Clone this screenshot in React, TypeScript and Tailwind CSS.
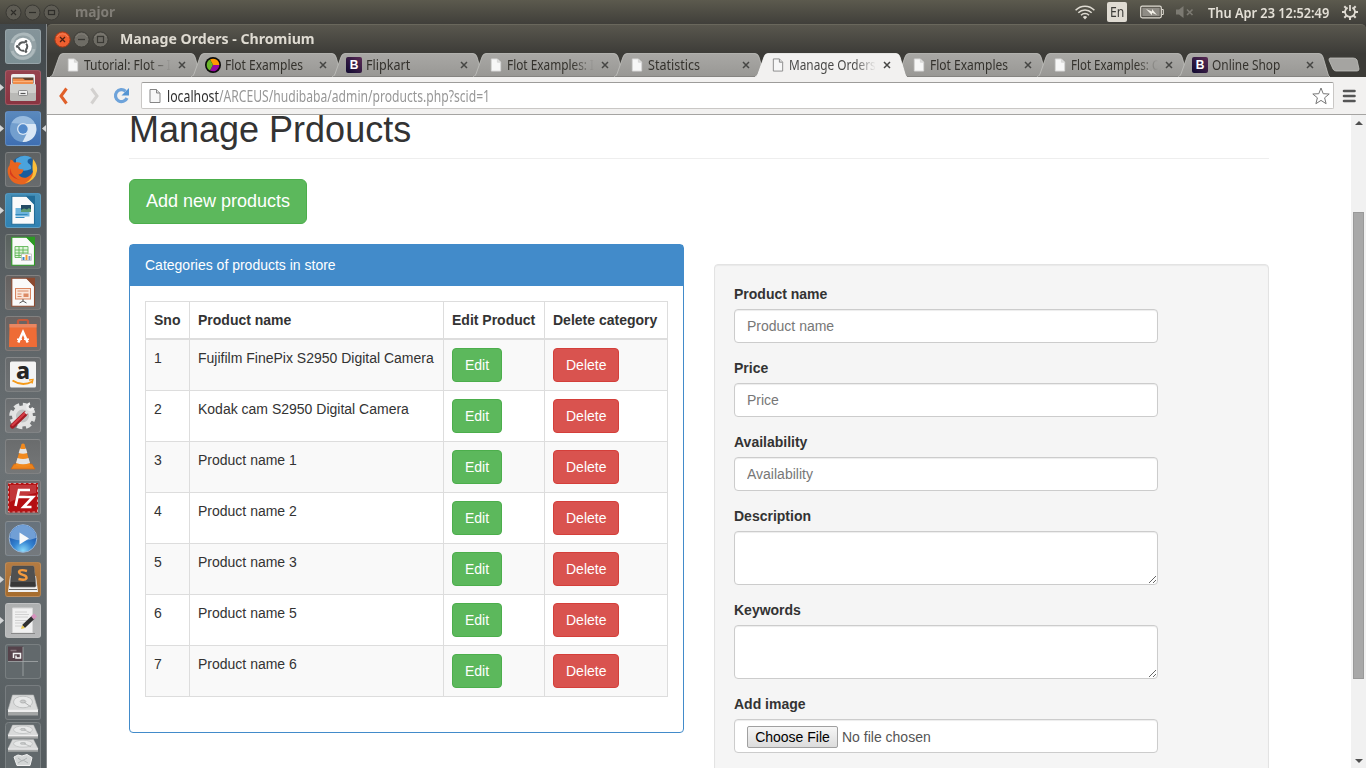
import { useLayoutEffect, useRef, useState, type ReactNode } from "react";

const uiFont = "font-['Ubuntu_Condensed','Noto_Sans',sans-serif]";

/** Single line of text condensed horizontally so that it fills `width` pixels. */
function FitText({ width, className = "", children }: { width: number; className?: string; children: ReactNode }) {
  const ref = useRef<HTMLSpanElement>(null);
  const [scale, setScale] = useState(1);
  useLayoutEffect(() => {
    if (ref.current) setScale(width / ref.current.offsetWidth);
  }, [width]);
  return (
    <span className={`block shrink-0 ${className}`} style={{ width }}>
      <span ref={ref} className="inline-block origin-left whitespace-nowrap" style={{ transform: `scaleX(${scale})` }}>
        {children}
      </span>
    </span>
  );
}

function Wheel({ kind, hot = false }: { kind: "close" | "min" | "max"; hot?: boolean }) {
  const ink = hot ? "#4b2013" : "#3a3934";
  return (
    <svg className="size-[17px] shrink-0" viewBox="0 0 17 17" fill="none">
      <circle cx="8.5" cy="8.5" r="7.6" fill={hot ? "#ee5f30" : "#6e6c65"} stroke={hot ? "#a83a18" : "#3d3c37"} />
      <path d="M3 6a6.4 6.4 0 0 1 11 0" stroke={hot ? "#f68b66" : "#85827a"} strokeWidth=".8" />
      {kind === "close" && <path d="M6 6l5 5M11 6l-5 5" stroke={ink} strokeWidth="1.3" />}
      {kind === "min" && <path d="M5 8.5h7" stroke={ink} strokeWidth="1.3" />}
      {kind === "max" && <rect x="5.5" y="5.5" width="6" height="6" stroke={ink} strokeWidth="1.2" />}
    </svg>
  );
}

function DimWheel({ kind }: { kind: "close" | "min" | "max" }) {
  return (
    <svg className="size-[17px] shrink-0" viewBox="0 0 17 17" fill="none" stroke="#2f2e2a">
      <circle cx="8.5" cy="8.5" r="7.5" fill="#5e5c54" stroke="#3a3934" />
      {kind === "close" && <path d="M6 6l5 5M11 6l-5 5" strokeWidth="1.1" />}
      {kind === "min" && <path d="M5 8.5h7" strokeWidth="1.2" />}
      {kind === "max" && <rect x="5.5" y="6.5" width="6" height="4" strokeWidth="1.2" />}
    </svg>
  );
}

function TopBar() {
  return (
    <div className={`flex h-6 shrink-0 items-center bg-linear-to-b from-[#5c5a4e] to-[#403f3a] pl-[5px] ${uiFont}`}>
      <div className="flex gap-[2px]">
        <DimWheel kind="close" />
        <DimWheel kind="min" />
        <DimWheel kind="max" />
      </div>
      <FitText width={40} className="ml-[15px] text-[14px] leading-6 font-bold text-[#807d76]">major</FitText>
      <svg className="ml-auto h-[15px] w-[20px] shrink-0" viewBox="0 0 20 15" fill="none" stroke="#dfdbd2" strokeWidth="1.5">
        <path d="M.6 5.2a13 13 0 0 1 18.8 0M3.3 7.8a9.4 9.4 0 0 1 13.4 0M6 10.3a5.6 5.6 0 0 1 8 0" />
        <path d="M7.8 12.1a3 3 0 0 1 4.4 0L10 14.5z" fill="#dfdbd2" stroke="none" />
      </svg>
      <span className="ml-[12px] flex h-5 w-5 shrink-0 items-center justify-center rounded-[2px] bg-[#dfdbd2] text-[14px] text-[#3c3b37]">
        <FitText width={14} className="leading-5">En</FitText>
      </span>
      <svg className="ml-[13px] h-[14px] w-[24px] shrink-0" viewBox="0 0 24 14" fill="none">
        <rect x=".7" y="1.2" width="20.6" height="11.6" rx="1.5" stroke="#dfdbd2" strokeWidth="1.2" />
        <path d="M22 4.5h1.3v5H22" stroke="#dfdbd2" />
        <rect x="2.3" y="2.8" width="17.4" height="8.4" fill="#8f8c85" />
        <path d="M6 4l6 2.600V4l5 6-5-2.200v2.400z" fill="#f3f0e8" />
      </svg>
      <svg className="ml-[12px] h-[14px] w-[18px] shrink-0" viewBox="0 0 18 14" fill="#7c7a72">
        <path d="M0 4.5h3L7.5 1v12L3 9.500H0z" />
        <path d="M11 4.500l5.500 5.500M16.500 4.500L11 10" stroke="#7c7a72" strokeWidth="1.6" />
      </svg>
      <FitText width={121} className="ml-[14px] text-[15px] leading-[22px] font-semibold text-[#e4e0d7]">Thu Apr 23 12:52:49</FitText>
      <svg className="mr-[8px] ml-[13px] size-4 shrink-0" viewBox="0 0 16 16" fill="none" stroke="#dfdbd2">
        <path d="M5.600 3.600a5 5 0 1 0 4.800 0" strokeWidth="1.8" />
        <path d="M8 1v6" strokeWidth="1.8" />
        <path d="M0 8h3M13 8h3M8 13v3M2.300 2.300l2 2M13.700 2.300l-2 2M2.300 13.700l2-2M13.700 13.700l-2-2" strokeWidth="2" />
      </svg>
    </div>
  );
}

/* ---------- Launcher ---------- */

function Doc({ c, children }: { c: string; children: ReactNode }) {
  return (
    <>
      <path d="M6.800 3.300h15l7.700 8v20H6.800z" fill="#fafafa" stroke={c} strokeWidth="1.1" />
      <path d="M21 2.700h9v9z" fill={c} />
      {children}
    </>
  );
}

function Disk() {
  return (
    <>
      <path d="M7.500 10h21l4.500 15H3z" fill="#d9dada" stroke="#b4b6b6" strokeWidth=".6" />
      <path d="M3 25h30v5.500H3z" fill="#a3a5a5" />
      <path d="M3 24.500h30V27H3z" fill="#efefef" />
      <ellipse cx="18" cy="17" rx="9.500" ry="5.800" fill="#e7e8e8" stroke="#bfc1c1" />
      <ellipse cx="18" cy="16.500" rx="2.800" ry="1.500" fill="#cbcdcd" stroke="#a9abab" strokeWidth=".8" />
      <path d="M19 17l7 5" stroke="#b0b2b2" />
    </>
  );
}

type App = { bg: string; left?: boolean; right?: boolean; art: ReactNode };

const apps: App[] = [
  {
    bg: "bg-linear-to-b from-[#85949a] to-[#7d9095]",
    art: (
      <>
        <circle cx="18" cy="17.500" r="13.500" fill="#93a1a5" />
        <path d="M7 14C9 4 24 1 29 12M29 20C27 31 11 33 7 22" fill="none" stroke="#adb9bc" strokeWidth="3" />
        <circle cx="18" cy="17.500" r="8.800" fill="#fff" />
        <circle cx="18" cy="17.500" r="4.300" fill="none" stroke="#56595a" strokeWidth="2" strokeDasharray="7.700 1.300" strokeDashoffset="3.800" />
        <circle cx="12.300" cy="17.500" r="1.400" fill="#56595a" />
        <circle cx="20.900" cy="12.500" r="1.400" fill="#56595a" />
        <circle cx="20.900" cy="22.500" r="1.400" fill="#56595a" />
      </>
    ),
  },
  {
    bg: "bg-linear-to-b from-[#95424e] to-[#8a3441]",
    left: true,
    art: (
      <>
        <path d="M6 6q0-2 2-2h20q2 0 2 2v9H6z" fill="#eee" />
        <path d="M7.500 7.500h21v6h-21z" fill="#5c402e" />
        <path d="M8 8.500h10l2 1.500h8v5H8z" fill="#ef8d4a" />
        <path d="M8 11h20v1H8z" fill="#fbb27b" />
        <rect x="5" y="14" width="26" height="17" rx="1.500" fill="#b9b9b6" />
        <rect x="5" y="14" width="26" height="9" rx="1.500" fill="#cfcfcc" />
        <rect x="13.500" y="20.500" width="9" height="5" rx="1" fill="#f1f1f1" stroke="#777" strokeWidth=".8" />
        <path d="M15.500 23.500h5" stroke="#555" strokeWidth="1.200" />
      </>
    ),
  },
  {
    bg: "bg-linear-to-b from-[#5a89bd] to-[#3f6fb2]",
    left: true,
    right: true,
    art: (
      <>
        <circle cx="18" cy="18" r="13" fill="#739fce" />
        <path d="M6.500 12A13 13 0 0 1 30 13H18z" fill="#98bbdf" />
        <path d="M30.500 13a13 13 0 0 1-13 18l5-10q1-4-4-8z" fill="#dae7f5" />
        <circle cx="18" cy="18" r="6" fill="#d6e5f4" />
        <circle cx="18" cy="18" r="4.700" fill="#5289ca" />
      </>
    ),
  },
  {
    bg: "bg-linear-to-b from-[#5f6263] to-[#686b6d]",
    art: (
      <>
        <circle cx="18.500" cy="17" r="13" fill="#195c9c" />
        <path d="M11 7q8-6 16-1-6 1-4 5 4 2 3 6-8 4-15-1z" fill="#4aa3dc" />
        <path d="M5.500 7.500q2 .500 4 3 4-1 7 1-4 2-3 5 2 1 5 1-1 5-5 5 3 4 8 3 5-2 7-7 1 6-2 9c-6 8-20 6-23-4-2-6 0-9 1-10z" fill="#e8641f" />
        <path d="M28 7q5 6 4 12-2 10-12 12 8-4 8-11-1-4 0-13z" fill="#fbbd39" />
        <path d="M5 16q2 10 11 12-8-1-11-6z" fill="#d83a1c" />
      </>
    ),
  },
  {
    bg: "bg-linear-to-b from-[#468fb7] to-[#2f82b3]",
    left: true,
    art: (
      <Doc c="#226c98">
        <rect x="10.500" y="15" width="14" height="8.500" fill="#6fb4dc" />
        <rect x="16" y="12" width="10" height="7" fill="#234a62" />
        <path d="M16 17l3-1.500 3 1 2-1.500 2 1.500v2.500H16z" fill="#5d9a72" />
        <path d="M10.500 21.500h12M10.500 24.500h9" stroke="#348abc" strokeWidth="1.200" />
      </Doc>
    ),
  },
  {
    bg: "bg-linear-to-b from-[#59615e] to-[#686e6d]",
    art: (
      <Doc c="#2c9b23">
        <path d="M10 12.500h13v11H10zM10 16h13M10 19h13M10 21.500h13M14 12.500v11M18 12.500v11" fill="#dff4da" stroke="#60b657" strokeWidth=".9" />
        <rect x="16.500" y="20" width="10" height="6.500" fill="#fff" stroke="#aaa" strokeWidth=".600" />
        <path d="M17.500 26v-3h2v3z" fill="#3c85c4" />
        <path d="M20.500 26v-5h2v5z" fill="#ef9b31" />
        <path d="M23.500 26v-4h2v4z" fill="#7f93c4" />
      </Doc>
    ),
  },
  {
    bg: "bg-linear-to-b from-[#656160] to-[#6f6e6d]",
    art: (
      <Doc c="#8c4a30">
        <rect x="10.500" y="13.500" width="15" height="10.500" fill="#fae5d9" stroke="#d98560" />
        <path d="M12.500 16h11M12.500 19h4M12.500 21.500h4" stroke="#d98c68" />
        <rect x="18.500" y="18.500" width="5" height="3.500" fill="#dc8a64" />
        <path d="M18 24v2M14.500 28l3.500-2 3.500 2" stroke="#555" fill="none" />
      </Doc>
    ),
  },
  {
    bg: "bg-linear-to-b from-[#6b6361] to-[#6d6b6a]",
    art: (
      <>
        <path d="M13 8.500V5.500q0-1.500 1.500-1.500h7q1.500 0 1.500 1.500v3" fill="none" stroke="#c55a3c" strokeWidth="2.200" />
        <path d="M4.500 8h27l.5 23H4z" fill="#ee6c36" />
        <path d="M4.500 8h27v3.500h-27z" fill="#e98661" />
        <path d="M13.300 26.500l4.700-10.500 4.700 10.500" fill="none" stroke="#fff" strokeWidth="2.500" />
        <path d="M12 23.200h5M19 23.200h5" stroke="#fff" strokeWidth="1.600" />
      </>
    ),
  },
  {
    bg: "bg-linear-to-b from-[#676a6c] to-[#707375]",
    art: (
      <>
        <rect x="5" y="4.500" width="26" height="26" rx="1.500" fill="#f3f3f3" />
        <text x="18" y="21.500" textAnchor="middle" fontFamily="Noto Sans" fontWeight="800" fontSize="23" fill="#252525">a</text>
        <path d="M7.500 23.500q10 6.500 20 1" fill="none" stroke="#f59a19" strokeWidth="1.800" />
        <path d="M24 23l4-.5-1 4" fill="none" stroke="#f59a19" strokeWidth="1.300" />
      </>
    ),
  },
  {
    bg: "bg-linear-to-b from-[#6b6e70] to-[#77797b]",
    art: (
      <>
        <circle cx="17.500" cy="18" r="11" fill="none" stroke="#e1e2e2" strokeWidth="4.500" strokeDasharray="5.200 3.440" />
        <circle cx="17.500" cy="18" r="8.500" fill="#c1c3c3" stroke="#e3e3e3" strokeWidth="4" />
        <path d="M7.500 28L20 16" stroke="#a31c24" strokeWidth="5" strokeLinecap="round" />
        <path d="M7.500 27L19.500 15.500" stroke="#d63c46" strokeWidth="2.200" strokeLinecap="round" />
        <path d="M20.500 15.500l3.500-3.500" stroke="#ddd" strokeWidth="3" />
        <path d="M28.500 10a3.200 3.200 0 1 1-3.500-4.500" fill="none" stroke="#eee" strokeWidth="2.600" />
      </>
    ),
  },
  {
    bg: "bg-linear-to-b from-[#6a6c6d] to-[#757778]",
    art: (
      <>
        <path d="M9 25h18l3 5H6z" fill="#ed831c" stroke="#cc6714" strokeWidth=".700" />
        <path d="M16.500 5q1.500-1 3 0l6 21.500q-7.500 3-15 0z" fill="#f28a1e" />
        <path d="M15 9.500q3 1 6 0l1.300 4.500q-4.300 1.500-8.600 0zM12.500 19q5.500 2 11 0l1.500 5q-7 2.500-14 0z" fill="#e4e4e4" />
      </>
    ),
  },
  {
    bg: "bg-linear-to-b from-[#6f6b6d] to-[#77797a]",
    art: (
      <>
        <rect x="3" y="3" width="30" height="29.500" fill="#b51515" />
        <rect x="3.500" y="3.500" width="29" height="28.500" fill="none" stroke="#d99a9a" strokeDasharray="2.500 2.500" />
        <rect x="5" y="5" width="26" height="25.500" fill="#b40e12" />
        <path d="M5 5h26v8Q18 15 5 22z" fill="#c2373a" />
        <path d="M10.500 26L14 10h11M12 17h7M18.500 17H28l-9.500 10h8" fill="none" stroke="#fff" strokeWidth="2.600" />
      </>
    ),
  },
  {
    bg: "bg-linear-to-b from-[#67727c] to-[#74797d]",
    art: (
      <>
        <defs>
          <radialGradient id="orb" cx=".5" cy=".95" r=".7">
            <stop offset="0" stopColor="#8bdcfb" />
            <stop offset=".5" stopColor="#3585d2" />
            <stop offset="1" stopColor="#1f58ab" />
          </radialGradient>
        </defs>
        <circle cx="18" cy="17.500" r="13.800" fill="url(#orb)" stroke="#98b6d8" />
        <path d="M5 17a13 13 0 0 1 26 0q-13 5-26 0z" fill="#719fd5" />
        <path d="M14.500 11.500l9.500 6-9.500 6z" fill="#f8f9fa" />
      </>
    ),
  },
  {
    bg: "bg-linear-to-b from-[#b47b42] to-[#a66c2d]",
    left: true,
    art: (
      <>
        <path d="M5 14h26l2 16H3z" fill="#f1f1f1" />
        <path d="M4 27.500h28" stroke="#444" strokeWidth=".8" />
        <path d="M8 4h20q1 0 1 1l2 18.500q0 1.500-1.500 1.500h-23Q5 25 5 23.500L7 5q0-1 1-1z" fill="#383838" stroke="#777" strokeWidth=".7" />
        <path d="M7.500 5h21l1.500 15H6z" fill="#505050" />
        <path d="M22 9q-7-2-8 .800 0 2 4 3t3.500 3.500q-1.500 2.500-8 .700" fill="none" stroke="#f39a3e" strokeWidth="2.400" />
      </>
    ),
  },
  {
    bg: "bg-linear-to-b from-[#aeb0b0] to-[#b7b8b9]",
    left: true,
    art: (
      <>
        <path d="M7.500 5h20v25h-20z" fill="#f1f1f1" stroke="#d6d6d6" />
        <path d="M10 9h12M10 11.500h14M10 14h13M10 17.500h12M10 20h10M10 23h7" stroke="#c9c9c9" strokeWidth=".8" />
        <path d="M6 30.500h24" stroke="#888" />
        <path d="M18.500 23.500L28.500 14" stroke="#303030" strokeWidth="4" />
        <path d="M27.500 15l3-3" stroke="#d692bd" strokeWidth="4" />
        <path d="M16 26l1.200-3.800 2.800 2.800z" fill="#e8c545" />
      </>
    ),
  },
  {
    bg: "bg-[#62696c]",
    art: (
      <>
        <rect x="3" y="2.500" width="15" height="15" fill="#55434b" />
        <path d="M18 3v29M3 17.500h30" stroke="#a4a9ab" strokeWidth=".8" />
        <path d="M5.500 6.500h6" stroke="#85757c" strokeWidth="1.500" />
        <path d="M8.500 14V9.500h7V14h-4.500v-2.500" fill="none" stroke="#f2f2f2" strokeWidth="1.500" />
      </>
    ),
  },
  { bg: "bg-[#61676a]", art: <Disk /> },
];

function Launcher() {
  return (
    <div className="flex w-[47px] shrink-0 flex-col overflow-hidden border-r border-[#85898b] bg-linear-to-b from-[#42484b] via-[#6c7275] via-60% to-[#555c5f] pt-[5px] pl-[5px] font-['Noto_Sans',sans-serif]">
      {apps.map((app, i) => (
        <div key={i} className={`relative mb-[6px] h-[35px] w-[36px] shrink-0 rounded-[3px] border border-white/15 ${app.bg}`}>
          <svg className="-mt-px -ml-px h-[35px] w-[36px] max-w-none" viewBox="0 0 36 35">{app.art}</svg>
          {app.left && (
            <svg className="absolute top-[13px] -left-[6px] h-[7px] w-[4px]" viewBox="0 0 4 7"><path d="M0 0l4 3.500-4 3.500z" fill="#d5d7d8" /></svg>
          )}
          {app.right && (
            <svg className="absolute top-[13px] -right-[6px] h-[7px] w-[4px]" viewBox="0 0 4 7"><path d="M4 0L0 3.500l4 3.500z" fill="#d5d7d8" /></svg>
          )}
        </div>
      ))}
      <svg className="-mt-[4px] h-[46px] w-[36px] shrink-0" viewBox="0 0 36 46">
        <path d="M.5 46V3.500q0-3 3-3h29q3 0 3 3V46" fill="#62696c" stroke="#7b8183" />
        <g transform="translate(0 -3.500) scale(1 .66)"><Disk /></g>
        <g transform="translate(0 11.500) scale(1 .6)"><Disk /></g>
        <path d="M9 35l4-2 4 1 5-1.500 5 3-2 8H12z" fill="#d3d6d6" stroke="#f0f0f0" />
        <path d="M13 36l4 3 5-3M13 41l5-3 5 3" fill="none" stroke="#b0b4b5" />
      </svg>
    </div>
  );
}

/* ---------- Browser chrome ---------- */

function PageIcon({ outline = "#cfcfcf", className = "" }: { outline?: string; className?: string }) {
  return (
    <svg className={`shrink-0 ${className}`} viewBox="0 0 12 15">
      <path d="M1 1h6.500L11 4.500V14H1z" fill="#f7f7f7" stroke={outline} />
      <path d="M7.500 1v3.500H11" fill="#ddd" stroke={outline} />
    </svg>
  );
}

function BootstrapIcon() {
  return (
    <span className="-ml-[3px] flex size-4 shrink-0 items-center justify-center rounded-[2px] bg-linear-to-tr from-[#100930] to-[#5c2a55] font-['Liberation_Sans',sans-serif] text-[12px] leading-4 font-bold text-white">
      B
    </span>
  );
}

function FlotIcon() {
  return (
    <svg className="-ml-[3px] size-4 shrink-0" viewBox="0 0 16 16">
      <circle cx="8" cy="8" r="8" fill="#0a0a0a" />
      <path d="M8 8L5 2.400A6.300 6.300 0 0 1 14.300 8z" fill="#ff9a00" />
      <path d="M8 8h6.300A6.300 6.300 0 0 1 5 13.500z" fill="#960aa0" />
      <path d="M8 8l-3 5.500A6.300 6.300 0 0 1 5 2.400z" fill="#6bb52a" />
    </svg>
  );
}

type TabInfo = { title: string; width: number; icon: "page" | "flot" | "boot"; active?: boolean; fade?: boolean };

const tabs: TabInfo[] = [
  { title: "Tutorial: Flot – I", width: 87, icon: "page", fade: true },
  { title: "Flot Examples", width: 78, icon: "flot" },
  { title: "Flipkart", width: 44, icon: "boot" },
  { title: "Flot Examples: I", width: 87, icon: "page", fade: true },
  { title: "Statistics", width: 52, icon: "page" },
  { title: "Manage Orders", width: 87, icon: "page", active: true, fade: true },
  { title: "Flot Examples", width: 78, icon: "page" },
  { title: "Flot Examples: C", width: 88, icon: "page", fade: true },
  { title: "Online Shop", width: 68, icon: "boot" },
];

function Tab({ tab }: { tab: TabInfo }) {
  const fill = tab.active ? "#f2f1f0" : "url(#tab-grey)";
  return (
    <div className={`relative -mr-[11px] h-6 w-[152px] shrink-0 ${tab.active ? "z-10" : ""}`}>
      <svg className="absolute inset-0 h-6 w-[152px]" viewBox="0 0 152 24">
        <defs>
          <linearGradient id="tab-grey" x1="0" y1="0" x2="0" y2="1">
            <stop offset="0" stopColor="#a9a8a5" />
            <stop offset="1" stopColor="#989794" />
          </linearGradient>
        </defs>
        <path d="M0 24Q2 23.500 3 21L9 4Q10 .5 13 .5H141Q144 .5 145 4L150 21Q150.500 23.500 152 24Z" fill={fill} />
        <path d="M0 24Q2 23.500 3 21L9 4Q10 .5 13 .5H141Q144 .5 145 4L150 21Q150.500 23.500 152 24" fill="none" stroke={tab.active ? "#fbfbfa" : "#c2c1be"} strokeWidth=".8" />
        {!tab.active && <path d="M1 23.600h150" stroke="#7d7c79" strokeWidth=".8" />}
      </svg>
      <div className="relative flex h-6 items-center pl-[17px]">
        {tab.icon === "page" && <PageIcon outline={tab.active ? "#888" : "#d6d6d5"} className="mr-[5px] h-[14px] w-[12px]" />}
        {tab.icon === "flot" && <span className="mr-[4px]"><FlotIcon /></span>}
        {tab.icon === "boot" && <span className="mr-[4px]"><BootstrapIcon /></span>}
        <div className={`w-[87px] overflow-hidden ${tab.fade ? "mask-r-from-75% mask-r-to-100%" : ""}`}>
          <FitText width={tab.width} className={`text-[14px] leading-[22px] ${tab.active ? "text-[#4a4a48]" : "text-[#34322d]"}`}>{tab.title}</FitText>
        </div>
        <svg className="ml-[7px] size-2 shrink-0" viewBox="0 0 8 8"><path d="M1 1l6 6M7 1L1 7" stroke="#464644" strokeWidth="1.500" /></svg>
      </div>
    </div>
  );
}

function BrowserChrome() {
  return (
    <div className={`shrink-0 ${uiFont}`}>
      <div className="bg-[#3c3b37]">
        <div className="rounded-t-[5px] border-t border-[#69675c] bg-linear-to-b from-[#59574e] to-[#3d3c38]">
          <div className="flex h-[28px] items-center pl-[7px]">
            <div className="flex gap-[2px]">
              <Wheel kind="close" hot />
              <Wheel kind="min" />
              <Wheel kind="max" />
            </div>
            <FitText width={195} className="ml-[11px] text-[14px] leading-7 font-bold text-[#dfdbd2]">Manage Orders - Chromium</FitText>
          </div>
        </div>
        <div className="flex h-6 pl-[3px]">
          {tabs.map((t, i) => <Tab key={i} tab={t} />)}
          <svg className="mt-[4px] ml-[9px] h-[16px] w-[32px] shrink-0" viewBox="0 0 32 16">
            <path d="M2 1h23q3 0 4 2l2 9q0 2-2 2H8q-2 0-3-2L1 3q0-2 1-2z" fill="#a5a4a1" stroke="#c2c1be" strokeWidth=".8" />
          </svg>
        </div>
      </div>
      <div className="flex h-[38px] items-center border-b border-[#a5a4a2] bg-[#f2f1f0] pl-[10px]">
        <svg className="h-[18px] w-[12px]" viewBox="0 0 12 18" fill="none"><path d="M9.500 1.500L4 9l5.500 7.500" stroke="#e0602a" strokeWidth="3" /></svg>
        <svg className="ml-[19px] h-[18px] w-[12px]" viewBox="0 0 12 18" fill="none"><path d="M3.500 1.500L9 9l-5.500 7.500" stroke="#d3d1cf" strokeWidth="3" /></svg>
        <svg className="ml-[13px] size-[17px]" viewBox="0 0 17 17" fill="none">
          <path d="M14 11A6 6 0 1 1 12.500 4.200" stroke="#6ea3da" strokeWidth="3.200" />
          <path d="M16 1v7.500H8.500z" fill="#5595d3" />
        </svg>
        <div className="ml-[11px] flex h-[27px] w-[1193px] items-center rounded-[2px] border border-[#c9c7c5] border-t-[#9d9c9a] bg-white pl-[7px]">
          <PageIcon outline="#858585" className="h-[16px] w-[12px]" />
          <FitText width={52} className="ml-[6px] text-[17px] leading-[22px] text-[#303030]">localhost</FitText>
          <FitText width={271} className="text-[17px] leading-[22px] text-[#979797]">/ARCEUS/hudibaba/admin/products.php?scid=1</FitText>
          <svg className="mr-[3px] ml-auto size-[18px]" viewBox="0 0 18 18"><path d="M9 1l2.200 5.700 6 .3-4.600 3.800 1.500 5.900L9 13.400l-5.100 3.300 1.500-5.900L.8 7l6-.3z" fill="#fff" stroke="#777" strokeLinejoin="round" /></svg>
        </div>
        <svg className="ml-[8px] h-[14px] w-[14px]" viewBox="0 0 14 14"><path d="M2 2h10.500M2 7h10.500M2 12h10.500" stroke="#555" strokeWidth="2.600" strokeLinecap="round" /></svg>
      </div>
    </div>
  );
}

/* ---------- Page ---------- */

const products = [
  "Fujifilm FinePix S2950 Digital Camera",
  "Kodak cam S2950 Digital Camera",
  "Product name 1",
  "Product name 2",
  "Product name 3",
  "Product name 5",
  "Product name 6",
];

function ProductTable() {
  const cell = "border border-[#ddd] p-2 text-left align-top";
  return (
    <table className="w-[523px] table-fixed border-collapse">
      <colgroup>
        <col className="w-[44px]" />
        <col className="w-[254px]" />
        <col className="w-[101px]" />
        <col />
      </colgroup>
      <thead>
        <tr>
          {["Sno", "Product name", "Edit Product", "Delete category"].map((h) => (
            <th key={h} className="border border-b-2 border-[#ddd] p-2 text-left font-bold whitespace-nowrap">{h}</th>
          ))}
        </tr>
      </thead>
      <tbody>
        {products.map((name, i) => (
          <tr key={name} className="odd:bg-[#f9f9f9]">
            <td className={cell}>{i + 1}</td>
            <td className={`${cell} whitespace-nowrap`}>{name}</td>
            <td className={cell}>
              <button className="block h-[34px] rounded-[4px] border border-[#4cae4c] bg-[#5cb85c] px-3 text-white">Edit</button>
            </td>
            <td className={cell}>
              <button className="block h-[34px] rounded-[4px] border border-[#d43f3a] bg-[#d9534f] px-3 text-white">Delete</button>
            </td>
          </tr>
        ))}
      </tbody>
    </table>
  );
}

function Field({ label, children }: { label: string; children: ReactNode }) {
  return (
    <div className="mb-[15px] w-[424px]">
      <label className="mb-[5px] block font-bold">{label}</label>
      {children}
    </div>
  );
}

const control = "block w-full rounded-[4px] border border-[#ccc] bg-white px-3 shadow-[inset_0_1px_1px_rgba(0,0,0,0.075)]";

function ProductForm() {
  return (
    <div className="mt-5 h-[560px] w-[555px] rounded-[4px] border border-[#e3e3e3] bg-[#f5f5f5] p-[19px] shadow-[inset_0_1px_1px_rgba(0,0,0,0.05)]">
      {["Product name", "Price", "Availability"].map((f) => (
        <Field key={f} label={f}>
          <input placeholder={f} className={`${control} h-[34px] placeholder:text-[#777]`} />
        </Field>
      ))}
      {["Description", "Keywords"].map((f) => (
        <Field key={f} label={f}>
          <textarea className={`${control} h-[54px] resize`} />
        </Field>
      ))}
      <Field label="Add image">
        <div className={`${control} flex h-[34px] items-center pt-[2px] text-[#555]`}>
          <button className="mr-1 h-[22px] w-[91px] rounded-[2px] border border-[#a0a0a0] bg-linear-to-b from-[#f6f6f6] to-[#dcdcdc] text-black">Choose File</button>
          No file chosen
        </div>
      </Field>
    </div>
  );
}

function Page() {
  return (
    <div className="flex min-h-0 flex-1 bg-white font-['Liberation_Sans',Arial,sans-serif] text-[14px] leading-5 text-[#333]">
      <div className="min-w-0 flex-1 overflow-hidden pl-[82px]">
        <div className="-mt-[6px] w-[1140px]">
          <h1 className="h-[50px] border-b border-[#eee] text-[36px] leading-[42px] font-medium">Manage Prdoucts</h1>
          <button className="mt-5 block h-[45px] w-[178px] rounded-[6px] border border-[#4cae4c] bg-[#5cb85c] pb-[2px] text-[18px] text-white">Add new products</button>
          <div className="mt-5 flex items-start justify-between">
            <div className="h-[489px] w-[555px] rounded-[4px] border border-[#428bca] bg-white">
              <div className="h-[41px] bg-[#428bca] px-[15px] py-[10px] text-white">Categories of products in store</div>
              <div className="p-[15px]">
                <ProductTable />
              </div>
            </div>
            <ProductForm />
          </div>
        </div>
      </div>
      <div className="flex w-[15px] flex-col items-center bg-[#f1f1f1]">
        <svg className="mt-[5px] h-[6px] w-[8px]" viewBox="0 0 8 6"><path d="M0 5l4-4 4 4z" fill="#505050" /></svg>
        <div className="mt-[86px] h-[467px] w-[11px] border border-[#999] bg-[#a8a8a8]" />
        <svg className="mt-auto mb-[4px] h-[6px] w-[8px]" viewBox="0 0 8 6"><path d="M0 1l4 4 4-4z" fill="#505050" /></svg>
      </div>
    </div>
  );
}

export default function App() {
  return (
    <div className="flex h-[768px] w-[1366px] flex-col overflow-hidden">
      <TopBar />
      <div className="flex min-h-0 flex-1 bg-[#3c3b37]">
        <Launcher />
        <div className="flex min-w-0 flex-1 flex-col">
          <BrowserChrome />
          <Page />
        </div>
      </div>
    </div>
  );
}
